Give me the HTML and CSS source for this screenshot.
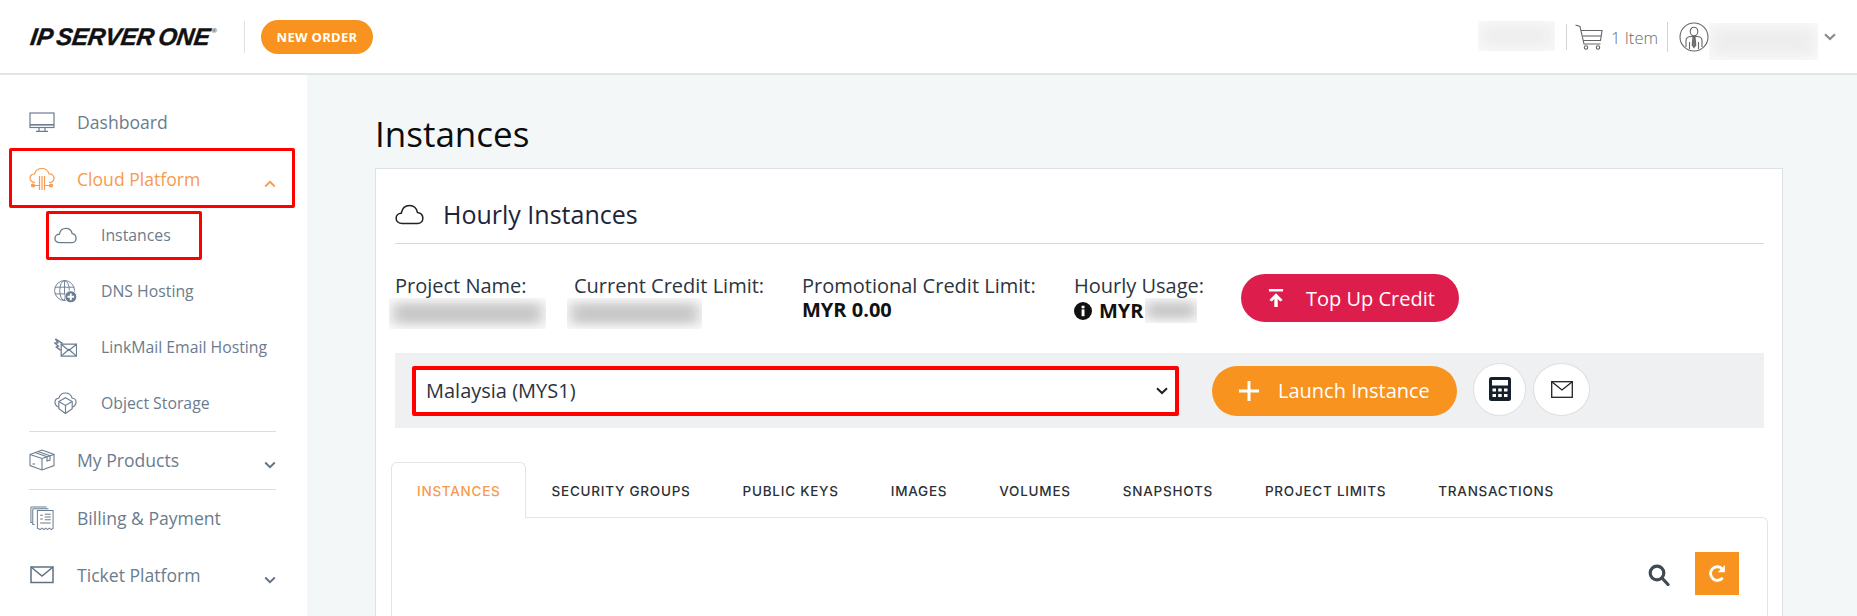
FILE: index.html
```html
<!DOCTYPE html>
<html lang="en">
<head>
<meta charset="utf-8">
<title>Instances</title>
<link rel="stylesheet" href="styles.css">
</head>
<body>
<header class="topbar">
  <div class="logo">IP SERVER ONE<sup class="logo-reg">®</sup></div>
  <span class="top-divider"></span>
  <a class="new-order">NEW ORDER</a>
  <div class="top-right">
    <span class="smudge smudge-credit"><i></i></span>
    <span class="thin-divider"></span>
    <svg class="cart-icon" viewBox="0 0 28 26" fill="none" stroke="#666" stroke-width="1.1"><path d="M0.5 1 L5 2.5 L9 20 H25.5"/><path d="M6 6.5 H27 L25.5 16.5 H8.2"/><path d="M7.6 12 H26"/><circle cx="11" cy="23.5" r="1.7"/><circle cx="23" cy="23.5" r="1.7"/></svg>
    <span class="cart-text">1 Item</span>
    <span class="thin-divider tall"></span>
    <svg class="avatar-icon" viewBox="0 0 30 30" fill="none" stroke="#666" stroke-width="1.1"><circle cx="15" cy="15" r="14"/><ellipse cx="15" cy="9.5" rx="3.8" ry="4.3"/><path d="M7 25 V18.5 C7 15.5 10 14.5 12.5 14.5 H17.5 C20 14.5 23 15.5 23 18.5 V25"/><path d="M10.5 20 V27 M19.5 20 V27"/><path d="M14 15.5 H16 L16.8 23 L15 25.5 L13.2 23 Z" fill="#777"/></svg>
    <span class="smudge smudge-user"><i></i></span>
    <svg class="top-chevron" viewBox="0 0 12 8" fill="none" stroke="#8a8a8a" stroke-width="2.2"><path d="M1 1.2 L6 6 L11 1.2"/></svg>
  </div>
</header>

<div class="shell">
  <nav class="sidebar">
    <a class="nav-row">
      <svg class="nav-icon" viewBox="0 0 26 20" fill="none" stroke="#6b7d90" stroke-width="1.2"><rect x="1" y="1" width="24" height="14.5"/><path d="M1 12.8 H25" stroke-width="1.6"/><path d="M10 15.5 V19 M16 15.5 V19 M7 19.4 H19"/></svg>
      <span>Dashboard</span>
    </a>
    <a class="nav-row nav-active marked">
      <svg class="nav-icon" viewBox="0 0 26 24" fill="none" stroke="#f79a4f" stroke-width="1.2"><path d="M6 15.5 C2.5 15.5 1 13 1 11 C1 8.5 3 6.8 5.5 7 C6.5 3.5 9.5 1.5 13 1.5 C16.5 1.5 19 3.5 20 6.8 C23 6.8 25 8.8 25 11.2 C25 13.6 23 15.5 20 15.5"/><path d="M10.5 9 V23 M13 9 V23 M15.5 9 V23"/><path d="M3 18.5 H10 M16 18.5 H23"/><circle cx="4" cy="18.5" r="1.5" fill="#f79a4f"/><circle cx="22" cy="18.5" r="1.5" fill="#f79a4f"/></svg>
      <span>Cloud Platform</span>
      <svg class="nav-chevron" viewBox="0 0 12 8" fill="none" stroke="#f79a4f" stroke-width="1.8"><path d="M1.2 6.5 L6 1.8 L10.8 6.5"/></svg>
    </a>
    <a class="sub-row marked-sub">
      <svg class="sub-icon" viewBox="0 0 24 18" fill="none" stroke="#6b7d90" stroke-width="1.4"><path d="M6 16.5 C3 16.5 1 14.5 1 12 C1 9.5 3 7.7 5.5 7.7 C6.3 4 9 1.5 12.5 1.5 C16 1.5 18.4 4 19 7 C21.5 7.3 23 9.3 23 12 C23 14.5 21 16.5 18.5 16.5 Z"/></svg>
      <span>Instances</span>
    </a>
    <a class="sub-row">
      <svg class="sub-icon" viewBox="0 0 24 24" fill="none" stroke="#6b7d90" stroke-width="1"><circle cx="11" cy="11" r="10.4"/><ellipse cx="11" cy="11" rx="5" ry="10.4"/><path d="M1 7.5 H21 M1 14.5 H21 M11 0.6 V21.4"/><circle cx="17.5" cy="17.5" r="6.3" fill="#6b7d90" stroke="#fff"/><path d="M17.5 14 V21 M14 17.5 H21" stroke="#fff" stroke-width="2"/></svg>
      <span>DNS Hosting</span>
    </a>
    <a class="sub-row">
      <svg class="sub-icon" viewBox="0 0 24 20" fill="none" stroke="#6b7d90" stroke-width="1.3"><rect x="7.5" y="6.5" width="16" height="12.5"/><path d="M7.5 19 L15.5 12 L23.5 19 M7.5 6.5 L15.5 13 L23.5 6.5"/><path d="M9 6 L1.5 1 L4 5 L1 5.5 L4.5 8.5 L2.5 9.5 L7 13" stroke-width="1.5"/></svg>
      <span>LinkMail Email Hosting</span>
    </a>
    <a class="sub-row">
      <svg class="sub-icon" viewBox="0 0 24 24" fill="none" stroke="#6b7d90" stroke-width="1.2"><path d="M5 16 C2.5 15 1 13 1 10.5 C1 8 3 6.5 5 6.5 C6 3 8.7 1 12 1 C15.3 1 18 3 19 6.5 C21 6.5 23 8 23 10.5 C23 13 21.5 15 19 16"/><path d="M12 6 L19 10 V17.5 L12 22.5 L5 17.5 V10 Z"/><path d="M5 10 L12 14 L19 10 M12 14 V22"/></svg>
      <span>Object Storage</span>
    </a>
    <a class="nav-row ruled">
      <svg class="nav-icon" viewBox="0 0 26 22" fill="none" stroke="#6b7d90" stroke-width="1.1"><path d="M1 5.5 L13 1 L25 5.5 V16.5 L13 21 L1 16.5 Z"/><path d="M1 5.5 L13 9.5 L25 5.5 M13 9.5 V21"/><path d="M6 3.5 L18 7.8 M9 2.5 L21 6.8 M18 8 V12 L21 11 V7"/><path d="M3.5 15 H6"/></svg>
      <span>My Products</span>
      <svg class="nav-chevron" viewBox="0 0 12 8" fill="none" stroke="#5f7184" stroke-width="1.8"><path d="M1.2 1.5 L6 6.2 L10.8 1.5"/></svg>
    </a>
    <a class="nav-row ruled">
      <svg class="nav-icon" viewBox="0 0 26 26" fill="none" stroke="#6b7d90" stroke-width="1.1"><path d="M1 1 H18 M1 1 V18 H3"/><path d="M3 3 H20 M3 3 V20 H5"/><path d="M8 5 H25 V24 L23 25.5 L21 24 L19 25.5 L17 24 L15 25.5 L13 24 L11 25.5 L8 24 Z" fill="#fff"/><path d="M11 10 H14 M11 14 H14 M16 9 H22.5 M16 12 H22.5 M16 15 H22.5 M11 18.5 H22.5"/></svg>
      <span>Billing &amp; Payment</span>
    </a>
    <a class="nav-row">
      <svg class="nav-icon" viewBox="0 0 26 20" fill="none" stroke="#5f7184" stroke-width="1.5"><rect x="2" y="2" width="22" height="15.5"/><path d="M2 2 L13 11 L24 2"/></svg>
      <span>Ticket Platform</span>
      <svg class="nav-chevron" viewBox="0 0 12 8" fill="none" stroke="#5f7184" stroke-width="1.8"><path d="M1.2 1.5 L6 6.2 L10.8 1.5"/></svg>
    </a>
  </nav>

  <main class="content">
    <h1 class="page-title">Instances</h1>
    <section class="card">
      <div class="card-head">
        <svg class="head-icon" viewBox="0 0 30 22" fill="none" stroke="#222" stroke-width="1.6"><path d="M7.5 20.5 C3.5 20.5 1 18 1 15 C1 12 3.2 9.8 6.3 9.7 C7.3 4.8 10.5 1.5 15 1.5 C19.5 1.5 22.5 4.8 23.3 8.8 C26.5 9.2 29 11.5 29 15 C29 18 26.7 20.5 23.5 20.5 Z"/></svg>
        <h2 class="card-title">Hourly Instances</h2>
      </div>
      <div class="info-row">
        <div class="info info-project">
          <div class="info-label">Project Name:</div>
          <span class="smudge smudge-project"><i></i></span>
        </div>
        <div class="info info-credit">
          <div class="info-label">Current Credit Limit:</div>
          <span class="smudge smudge-limit"><i></i></span>
        </div>
        <div class="info info-promo">
          <div class="info-label">Promotional Credit Limit:</div>
          <div class="info-value">MYR 0.00</div>
        </div>
        <div class="info info-usage">
          <div class="info-label">Hourly Usage:</div>
          <div class="info-value usage-value">
            <svg class="info-dot" viewBox="0 0 18 18"><circle cx="9" cy="9" r="9" fill="#111"/><rect x="7.6" y="7.4" width="2.9" height="6.8" fill="#fff"/><rect x="7.6" y="3.7" width="2.9" height="2.6" fill="#fff"/></svg>
            <span>MYR</span>
            <span class="smudge smudge-usage"><i></i></span>
          </div>
        </div>
        <a class="pill pill-red">
          <svg class="pill-icon" viewBox="0 0 18 20" fill="#fff"><rect x="1" y="0.5" width="15" height="2.6"/><path d="M8.5 5 L15.5 12 L13 13.6 L10.3 11 V19.5 H6.7 V11 L4 13.6 L1.5 12 Z"/></svg>
          Top Up Credit
        </a>
      </div>
      <div class="action-bar">
        <div class="region-wrap">
          <select class="region"><option>Malaysia (MYS1)</option></select>
          <svg class="region-chevron" viewBox="0 0 12 8" fill="none" stroke="#1d2228" stroke-width="2"><path d="M1 1.2 L6 6 L11 1.2"/></svg>
        </div>
        <a class="pill pill-orange">
          <svg class="plus-icon" viewBox="0 0 20 20" fill="none" stroke="#fff" stroke-width="3"><path d="M10 0 V20 M0 10 H20"/></svg>
          Launch Instance
        </a>
        <a class="round-btn round-calc">
          <svg class="calc-icon" viewBox="0 0 22 24"><rect x="0" y="0" width="22" height="24" rx="2.5" fill="#15202b"/><rect x="3" y="3" width="16" height="5.5" fill="#fff"/><path d="M3.5 11.5 h3.5 v3 h-3.5z M9.2 11.5 h3.5 v3 h-3.5z M15 11.5 h3.5 v3 h-3.5z M3.5 17 h3.5 v3 h-3.5z M9.2 17 h3.5 v3 h-3.5z M15 17 h3.5 v3 h-3.5z" fill="#fff"/></svg>
        </a>
        <a class="round-btn round-wide">
          <svg class="mail-icon" viewBox="0 0 22 17" fill="none" stroke="#222" stroke-width="1.3"><rect x="0.7" y="0.7" width="20.6" height="15.6"/><path d="M0.7 0.7 L11 9 L21.3 0.7"/></svg>
        </a>
      </div>
      <div class="tabs">
        <a class="tab tab-active">INSTANCES</a>
        <a class="tab">SECURITY GROUPS</a>
        <a class="tab">PUBLIC KEYS</a>
        <a class="tab">IMAGES</a>
        <a class="tab">VOLUMES</a>
        <a class="tab">SNAPSHOTS</a>
        <a class="tab">PROJECT LIMITS</a>
        <a class="tab">TRANSACTIONS</a>
      </div>
      <div class="tab-panel">
        <svg class="search-icon" viewBox="0 0 22 22" fill="none" stroke="#3f4a55" stroke-width="3.2"><circle cx="9" cy="9" r="6.8"/><path d="M14 14 L20 20.5" stroke-linecap="round"/></svg>
        <a class="refresh">
          <svg class="refresh-icon" viewBox="0 0 18 20" fill="none" stroke="#fff" stroke-width="3"><path d="M14.5 14.5 A7.2 7.2 0 1 1 13.5 4.5"/><path d="M16.8 1 V8.8 H9.2 Z" fill="#fff" stroke="none"/></svg>
        </a>
      </div>
    </section>
  </main>
</div>
</body>
</html>
```
FILE: styles.css
```css
*, *::after { box-sizing: border-box; }
html, body { margin: 0; height: 616px; overflow: hidden; background: #fff; }
body { font-family: "Open Sans", "Noto Sans", sans-serif; color: #111; }
a { text-decoration: none; }
h1, h2 { margin: 0; font-weight: 400; }

.smudge { display: block; overflow: hidden; background: #fafafa; }
.smudge i { display: block; width: 100%; height: 100%; background: #c8c8c8; filter: blur(7px); transform: scale(0.95, 0.7); }

.topbar { height: 75px; display: flex; align-items: center; padding: 1px 21px 0 29px; border-bottom: 2px solid #e2e4e6; }
.logo { width: 184px; font: italic 700 24px/1 "Liberation Sans", sans-serif; color: #111; white-space: nowrap; letter-spacing: -0.2px; word-spacing: -2px; -webkit-text-stroke: 0.4px #111; transform: skewX(-8deg); transform-origin: left bottom; }
.logo-reg { font-size: 7px; color: #555; vertical-align: 12px; line-height: 0; font-style: normal; -webkit-text-stroke: 0; margin-left: 1px; }
.top-divider { width: 1px; height: 32px; margin-left: 31px; background: #e0e0e0; }
.new-order { width: 112px; height: 34px; margin-left: 16px; border-radius: 17px; background: #f7931e; color: #fff; font-size: 13px; font-weight: 700; line-height: 34px; text-align: center; letter-spacing: 0.3px; }
.top-right { margin-left: auto; display: flex; align-items: center; }
.smudge-credit { width: 77px; height: 30px; background: #fafafa; margin-top: -2px; }
.smudge-credit i { background: #eeeeee; transform: scale(0.95, 0.8); }
.smudge-user { width: 109px; height: 37px; margin-top: 9px; background: #fafafa; }
.smudge-user i { background: #ededed; transform: scale(0.95, 0.8); }
.thin-divider { width: 1px; height: 26px; margin-left: 11px; background: #d4d4d4; }
.thin-divider.tall { height: 30px; margin-left: 8px; }
.cart-icon { width: 28px; height: 26px; margin-left: 8px; }
.cart-text { width: 48px; margin-left: 8px; font-size: 16.5px; color: #6a6a6a; font-weight: 300; white-space: nowrap; }
.avatar-icon { width: 30px; height: 30px; margin-left: 11px; }
.top-chevron { width: 12px; height: 8px; margin-left: 6px; }

.shell { display: flex; height: 541px; }
.sidebar { width: 307px; flex: none; padding: 19px 31px 0 29px; background: #fff; }
.content { flex: 1; min-width: 0; padding: 0 74px 0 68px; background: #f4f7f8; }

.nav-row { height: 56px; display: flex; align-items: center; color: #6a7c8e; font-size: 17.6px; position: relative; }
.nav-row > span { margin-left: 22px; margin-top: -1px; }
.nav-icon { width: 26px; height: 24px; flex: none; }
.nav-active { color: #f79a4f; margin-top: 1px; }
.nav-chevron { width: 12px; height: 8px; margin-left: auto; margin-top: 9px; flex: none; }
.ruled { height: 58px; padding-bottom: 1px; border-top: 1px solid #dcdcdc; }
.sub-row { height: 56px; display: flex; align-items: center; padding-left: 25px; color: #6a7c8e; font-size: 15.8px; position: relative; }
.sub-row > span { margin-left: 24px; margin-top: -1px; white-space: nowrap; }
.sub-icon { width: 23px; height: 23px; flex: none; }
.marked::after { content: ""; position: absolute; left: -20px; right: -19px; top: -3px; bottom: -1px; border: 3px solid #f00; border-radius: 2px; }
.marked-sub::after { content: ""; position: absolute; left: 17px; top: 4px; width: 156px; height: 49px; border: 3px solid #f00; border-radius: 2px; }

.page-title { height: 93px; padding-top: 29px; font-size: 35px; line-height: 60px; font-weight: 500; color: #0c0c0c; }
.card { height: 448px; padding: 0 15px; background: #fff; border: 1px solid #dfe1e3; border-bottom: 0; }
.card-head { height: 75px; margin: 0 3px 0 4px; display: flex; align-items: center; padding-top: 16px; border-bottom: 1px solid #d9d9d9; }
.head-icon { width: 29px; height: 21px; }
.card-title { margin-left: 19px; font-size: 25px; color: #20243a; }

.info-row { height: 109px; display: flex; align-items: flex-start; padding-top: 29px; position: relative; }
.info { flex: none; }
.info-label { font-size: 20px; line-height: 25px; color: #2b3440; white-space: nowrap; }
.info-value { font-size: 20px; line-height: 24px; font-weight: 700; color: #111; white-space: nowrap; }
.info-project { width: 179px; margin-left: 4px; }
.info-credit { width: 228px; }
.info-promo { width: 272px; }
.info-usage { width: 167px; }
.smudge-project { width: 157px; height: 31px; margin-left: -6px; background: #fbfbfb; }
.smudge-limit { width: 135px; height: 31px; margin-left: -7px; background: #fbfbfb; }
.usage-value { display: flex; align-items: center; }
.info-dot { width: 18px; height: 18px; margin-right: 7px; }
.smudge-usage { width: 52px; height: 25px; margin-left: 1px; background: #fbfbfb; }

.pill { display: flex; align-items: center; color: #fff; border-radius: 25px; white-space: nowrap; }
.pill-red { width: 218px; height: 48px; padding-left: 27px; background: #dd1e4c; font-size: 20px; margin-top: 1px; }
.pill-icon { width: 17px; height: 20px; margin-right: 21px; }
.action-bar { height: 75px; margin: 0 3px 0 4px; background: #eff0f2; display: flex; align-items: center; padding-left: 17px; }
.region-wrap { position: relative; width: 767px; height: 50px; flex: none; }
.region { width: 100%; height: 100%; padding: 0 30px 0 10px; appearance: none; border: 4px solid #f00; border-radius: 2px; background: #fff; font: 20px "Open Sans", sans-serif; color: #2b3440; }
.region-chevron { position: absolute; right: 11px; top: 21px; width: 12px; height: 8px; pointer-events: none; }
.pill-orange { width: 245px; height: 50px; margin-left: 33px; padding-left: 27px; background: #f7931e; font-size: 20px; }
.plus-icon { width: 20px; height: 20px; margin-right: 19px; }
.round-btn { width: 53px; height: 53px; margin-left: 7px; display: flex; align-items: center; justify-content: center; border: 1px solid #dedede; border-radius: 50%; background: #fff; margin-top: -3px; }
.round-calc { margin-left: 16px; }
.round-wide { width: 57px; }
.calc-icon { width: 22px; height: 24px; }
.mail-icon { width: 22px; height: 17px; }

.tabs { margin-top: 34px; display: flex; height: 55px; position: relative; }
.tab { padding: 0 26px; font: 500 13.5px/59px "Inter", sans-serif; letter-spacing: 0.75px; color: #2c3036; white-space: nowrap; }
.tab-active { padding: 0 24px 0 25px; color: #f79a4f; background: #fff; border: 1px solid #e2e4e8; border-bottom: 0; border-radius: 6px 6px 0 0; height: 56px; position: relative; z-index: 1; line-height: 57px; }
.tab-panel { height: 99px; margin-right: -1px; border: 1px solid #e2e4e8; border-bottom: 0; border-radius: 0 6px 0 0; display: flex; justify-content: flex-end; align-items: flex-start; padding: 34px 28px 0 0; }
.search-icon { width: 22px; height: 22px; margin-top: 12px; }
.refresh { width: 44px; height: 43px; margin-left: 25px; background: #f7931e; display: flex; align-items: center; justify-content: center; }
.refresh-icon { width: 17px; height: 19px; }
```
